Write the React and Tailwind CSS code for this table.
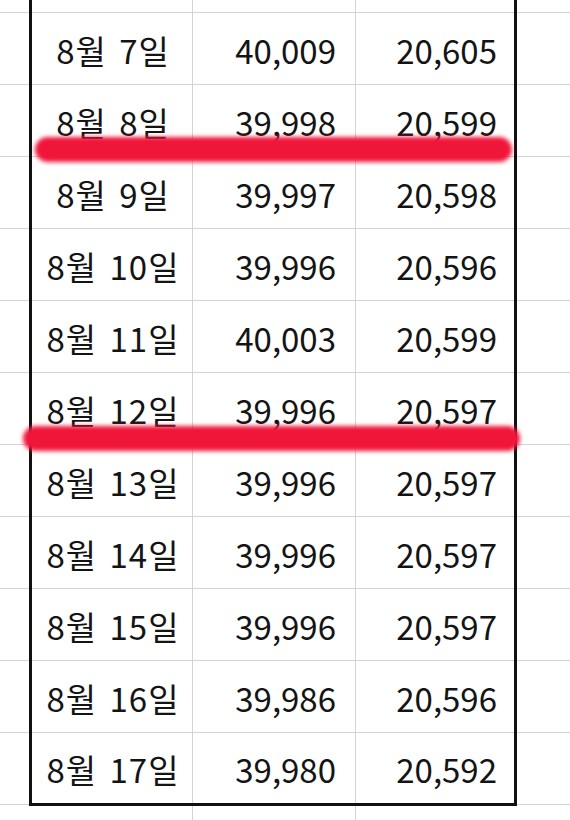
import React from "react";

const rows = [
  ["8월 7일", "40,009", "20,605"],
  ["8월 8일", "39,998", "20,599"],
  ["8월 9일", "39,997", "20,598"],
  ["8월 10일", "39,996", "20,596"],
  ["8월 11일", "40,003", "20,599"],
  ["8월 12일", "39,996", "20,597"],
  ["8월 13일", "39,996", "20,597"],
  ["8월 14일", "39,996", "20,597"],
  ["8월 15일", "39,996", "20,597"],
  ["8월 16일", "39,986", "20,596"],
  ["8월 17일", "39,980", "20,592"],
];

const font = { fontFamily: '"Noto Sans CJK KR", "Noto Sans", sans-serif' };

function Strip({ width }) {
  return (
    <div className={`flex flex-col ${width}`}>
      <div className="h-[13px] border-b border-[#d4d4d4]" />
      {rows.map((_, i) => (
        <div key={i} className="h-[72px] border-b border-[#d4d4d4] shrink-0" />
      ))}
      <div className="flex-1" />
    </div>
  );
}

export default function App() {
  return (
    <div
      className="relative w-[570px] h-[820px] overflow-hidden bg-white text-[#141414]"
      style={font}
    >
      <div className="flex h-full">
        <Strip width="w-[29px]" />
        <div className="flex flex-col w-[488px]">
          <div className="border-x-[3px] border-b-[3px] border-[#111]">
            <div className="flex h-[13px] border-b border-[#d4d4d4]">
              <div className="w-[161px] border-r border-[#d4d4d4]" />
              <div className="w-[163px] border-r border-[#d4d4d4]" />
              <div className="flex-1" />
            </div>
            {rows.map((r, i) => (
              <div
                key={i}
                className={`flex text-[33px] leading-none ${
                  i === rows.length - 1 ? "h-[70px]" : "h-[72px] border-b border-[#d4d4d4]"
                }`}
              >
                <div className="w-[161px] border-r border-[#d4d4d4] flex items-center justify-center pt-[3px] pl-[2px] tracking-[1px] [word-spacing:4px]">
                  {r[0]}
                </div>
                <div className="w-[163px] border-r border-[#d4d4d4] flex items-center justify-end pr-[19px] pt-[3px]">
                  {r[1]}
                </div>
                <div className="flex-1 flex items-center justify-end pr-[17px] pt-[3px]">
                  {r[2]}
                </div>
              </div>
            ))}
          </div>
          <div className="flex flex-1">
            <div className="w-[3px]" />
            <div className="w-[161px] border-r border-[#d4d4d4]" />
            <div className="w-[163px] border-r border-[#d4d4d4]" />
            <div className="flex-1" />
          </div>
        </div>
        <Strip width="flex-1" />
      </div>

      <div className="absolute left-[35px] top-[137px] w-[477px] h-[25px] rounded-full bg-[#f0163a] blur-[2px]" />
      <div className="absolute left-[23px] top-[426px] w-[497px] h-[25px] rounded-full bg-[#f0163a] blur-[2px]" />
    </div>
  );
}
